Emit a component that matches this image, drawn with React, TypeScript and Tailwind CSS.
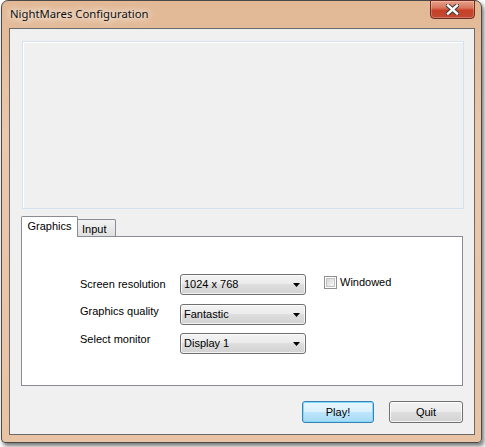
// Win7-style Unity launcher config dialog

const comboBg =
  "bg-[linear-gradient(#f3f3f3_0%,#ebebeb_50%,#dedede_50%,#d2d2d2_100%)]";

function Combo({ value }: { value: string }) {
  return (
    <div
      className={`w-[126px] h-[21px] shrink-0 rounded-[3px] border border-[#707070] ${comboBg} flex items-center pl-[3px] pr-[5px] shadow-[inset_0_0_0_1px_rgba(255,255,255,0.7)]`}
    >
      <span className="flex-1 text-[11px] text-black leading-none">{value}</span>
      <svg width="7" height="4" viewBox="0 0 7 4">
        <path d="M0 0h7L3.5 4z" fill="#000" />
      </svg>
    </div>
  );
}

function Row({
  label,
  value,
  labelPad,
  extra,
  className = "",
}: {
  label: string;
  value: string;
  labelPad: string;
  extra?: React.ReactNode;
  className?: string;
}) {
  return (
    <div className={`flex items-start ${className}`}>
      <div className={`w-[100px] shrink-0 text-[11px] leading-[13px] text-black ${labelPad}`}>
        {label}
      </div>
      <Combo value={value} />
      {extra}
    </div>
  );
}

export default function App() {
  return (
    <div className="w-[485px] h-[447px] bg-white overflow-hidden font-['Liberation_Sans',Arial,sans-serif]">
      {/* window frame */}
      <div className="relative ml-[1px] w-[481px] h-[443px] rounded-t-[7px] rounded-b-[4px] border border-[#4a4a4a] bg-[linear-gradient(#e2b895,#eac8ab_30%,#e8c3a4)] shadow-[2px_3px_4px_rgba(0,0,0,0.55)] flex flex-col">
        {/* title bar */}
        <div className="h-[27px] shrink-0 flex items-start">
          <span className="ml-[8px] mt-[5px] text-[11.3px] leading-[16px] text-[#111] font-['Noto_Sans',sans-serif] [text-shadow:0_0_6px_#fff,0_0_10px_#fff]">
            NightMares Configuration
          </span>
        </div>
        <div className="absolute top-[-1px] right-[6px] w-[45px] h-[19px] rounded-b-[4px] border border-[#6e2d22] bg-[linear-gradient(#e8a08b_0%,#d7765e_40%,#c83f25_55%,#c24a33_100%)] shadow-[inset_0_0_0_1px_rgba(255,255,255,0.25)] flex items-center justify-center">
          <svg width="13" height="11" viewBox="0 0 13 11">
            <path d="M2 1.5L11 9.5M11 1.5L2 9.5" stroke="#3c3c3c" strokeWidth="4.4" strokeLinecap="square" />
            <path d="M2 1.5L11 9.5M11 1.5L2 9.5" stroke="#fff" strokeWidth="2.4" strokeLinecap="square" />
          </svg>
        </div>

        {/* client area */}
        <div className="ml-[7px] mr-[6px] h-[407px] border border-[#6a6a6a] bg-[#f0f0f0] flex flex-col">
          {/* banner placeholder */}
          <div className="ml-[12px] mt-[12px] w-[442px] h-[168px] border border-[#d6e2ee] bg-[#f0f0f0] shadow-[inset_1px_1px_0_#fff]" />

          {/* tabs */}
          <div className="ml-[11px] mt-[7px] flex items-end h-[20px]">
            <div className="relative z-10 w-[57px] h-[21px] -mb-[1px] bg-white border border-b-0 border-[#898c95] rounded-t-[2px] flex justify-center pt-[3px] text-[11px] leading-[13px] text-black">
              Graphics
            </div>
            <div className="w-[38px] h-[17px] border-t border-r border-[#898c95] rounded-tr-[2px] bg-[linear-gradient(#f2f2f2,#e0e0e0)] pl-[4px] pt-[3px] text-[11px] leading-[13px] text-black">
              Input
            </div>
          </div>
          <div className="ml-[11px] w-[442px] h-[150px] border border-[#898c95] bg-white pl-[58px] pt-[37px]">
            <Row
              label="Screen resolution"
              value="1024 x 768"
              labelPad="pt-[4px]"
              extra={
                <div className="ml-[18px] mt-[2px] flex items-center">
                  <div className="w-[13px] h-[13px] border border-[#8f8f8f] bg-white p-[1px]">
                    <div className="w-full h-full border border-[#c2c2c2] bg-[linear-gradient(135deg,#d6d6d6,#f8f8f8)]" />
                  </div>
                  <span className="ml-[3px] text-[11px] leading-[13px] text-black">Windowed</span>
                </div>
              }
            />
            <Row label="Graphics quality" value="Fantastic" labelPad="pt-[1px]" className="mt-[9px]" />
            <Row label="Select monitor" value="Display 1" labelPad="pt-[0px]" className="mt-[8px]" />
          </div>

          {/* buttons */}
          <div className="mt-[15px] pr-[11px] flex justify-end gap-[15px]">
            <button className="w-[72px] h-[22px] rounded-[3px] border border-[#3c7fb1] bg-[linear-gradient(#eaf6fd_0%,#d9f0fc_50%,#bee6fd_50%,#a7d9f5_100%)] shadow-[inset_0_0_0_1px_#7fdcf8] text-[11px] text-black">
              Play!
            </button>
            <button className={`w-[74px] h-[22px] rounded-[3px] border border-[#707070] ${comboBg} shadow-[inset_0_0_0_1px_rgba(255,255,255,0.8)] text-[11px] text-black`}>
              Quit
            </button>
          </div>
        </div>
      </div>
    </div>
  );
}
